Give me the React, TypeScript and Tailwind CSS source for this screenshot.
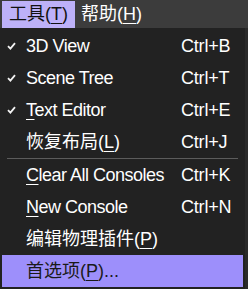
import React from "react";

type Item = {
  label: React.ReactNode;
  shortcut?: string;
  checked?: boolean;
  active?: boolean;
  latin?: boolean;
};

const font = {
  fontFamily: '"Liberation Sans", "Noto Sans CJK SC", sans-serif',
};

// underline one mnemonic letter
const U: React.FC<{ children: React.ReactNode }> = ({ children }) => (
  <span className="underline underline-offset-[3px] decoration-1">{children}</span>
);

const Check: React.FC = () => (
  <svg width="9" height="8" viewBox="0 0 9 8" className="block">
    <path d="M1 4.2 L3.4 6.6 L8 1.2" fill="none" stroke="#f2f2f2" strokeWidth="1.8" />
  </svg>
);

const MenuRow: React.FC<{ item: Item }> = ({ item }) => (
  <div
    className={`flex h-[32px] items-center text-[18px] ${
      item.active ? "bg-[#9d8ffb] text-[#1a1a1a]" : "text-white"
    }`}
  >
    <div className="flex w-[24px] shrink-0 items-center justify-start pl-[5px]">
      {item.checked && <Check />}
    </div>
    <div className={`flex-1 whitespace-nowrap ${item.latin ? "tracking-[-0.5px]" : ""}`}>
      {item.label}
    </div>
    <div className="w-[62px] shrink-0 whitespace-nowrap tracking-[-0.2px]">{item.shortcut}</div>
  </div>
);

const topItems: Item[] = [
  { label: "3D View", shortcut: "Ctrl+B", checked: true, latin: true },
  { label: "Scene Tree", shortcut: "Ctrl+T", checked: true, latin: true },
  { label: <><U>T</U>ext Editor</>, shortcut: "Ctrl+E", checked: true, latin: true },
  { label: <>恢复布局(<U>L</U>)</>, shortcut: "Ctrl+J" },
];

const bottomItems: Item[] = [
  { label: <><U>C</U>lear All Consoles</>, shortcut: "Ctrl+K", latin: true },
  { label: <><U>N</U>ew Console</>, shortcut: "Ctrl+N", latin: true },
  { label: <>编辑物理插件(<U>P</U>)</> },
  { label: <>首选项(<U>P</U>)...</>, active: true },
];

const App: React.FC = () => {
  return (
    <div className="h-[289px] w-[248px] overflow-hidden bg-[#2a2a2a]" style={font}>
      {/* Menu bar */}
      <div className="flex h-[28px] items-stretch bg-[#3c3c3c] pl-[2px] text-[18px]">
        <div className="mt-[1px] flex items-center bg-[#bdb1f8] px-[7px] text-[#111]">
          工具(<U>T</U>)
        </div>
        <div className="flex items-center pl-[6px] text-white">
          帮助(<U>H</U>)
        </div>
      </div>

      {/* Dropdown */}
      <div className="mr-[3px] bg-[#222222] px-[2px] pt-[2px]">
        {topItems.map((item, i) => (
          <MenuRow key={i} item={item} />
        ))}
        <div className="mx-[5px] h-px bg-[#5c5c5c]" />
        {bottomItems.map((item, i) => (
          <MenuRow key={i} item={item} />
        ))}
        <div className="h-[2px]" />
      </div>
    </div>
  );
};

export default App;
